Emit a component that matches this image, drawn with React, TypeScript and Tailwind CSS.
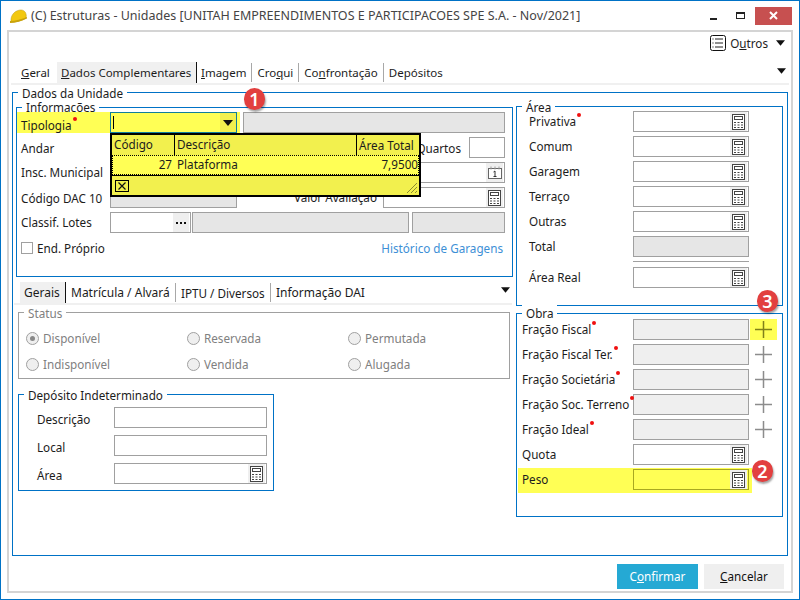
import React from "react";

const Calc = () => (
  <span className="flex w-[17px] h-[19px] items-center justify-center bg-[#efefef]">
    <svg width="14" height="16" viewBox="0 0 14 16" fill="none">
      <rect x="0.5" y="0.5" width="12" height="15" fill="#fff" stroke="#444" />
      <rect x="2.5" y="2.5" width="8" height="3" fill="#fff" stroke="#444" />
      <path d="M2 8h2v1H2zM5.500 8h2v1h-2zM9 8h2v1H9zM2 10.500h2v1H2zM5.500 10.500h2v1h-2zM9 10.500h2v1H9zM2 13h2v1H2zM5.500 13h2v1h-2zM9 13h2v1H9z" fill="#444" />
    </svg>
  </span>
);

const Caret = ({ w = 10 }: { w?: number }) => (
  <svg width={w} height="6" viewBox="0 0 10 6"><path d="M0 0h10L5 6z" fill="#111" /></svg>
);

const Star = () => <span className="inline-block w-[4px] h-[4px] rounded-full bg-[#f01010] mb-[9px] ml-[1px]" />;

function Input({ w, kind = "plain", icon, className = "" }: { w: number; kind?: "plain" | "gray" | "light" | "yellow"; icon?: React.ReactNode; className?: string }) {
  const bg = kind === "gray" ? "bg-[#e6e6e6]" : kind === "light" ? "bg-[#efefef]" : kind === "yellow" ? "bg-[#ffff55] border-[#a8a820]" : "bg-white";
  return (
    <div style={{ width: w }} className={`h-[21px] shrink-0 border border-[#a0a0a0] flex items-center justify-end pr-[1px] ${bg} ${className}`}>
      {icon}
    </div>
  );
}

function Box({ title, className = "", gray = false, raised = false, children }: { title: string; className?: string; gray?: boolean; raised?: boolean; children?: React.ReactNode }) {
  return (
    <div className={`relative border ${gray ? "border-[#a0a0a0]" : "border-[#0072c6]"} ${className}`}>
      <span className={`absolute left-[5px] ${raised ? "top-[-9px]" : "top-[-8px]"} h-[16px] leading-[16px] bg-white px-[4px] whitespace-nowrap ${gray ? "text-[#808080]" : ""}`}>{title}</span>
      {children}
    </div>
  );
}

const Sep = () => <span className="w-px h-[19px] bg-[#a8a8a8] mx-[5px]" />;

const Badge = ({ n, className }: { n: number; className: string }) => (
  <span className={`absolute z-30 w-[21px] h-[22px] rounded-full bg-[#e23f3f] text-white text-[18px] font-semibold leading-[22px] text-center shadow-[1px_2px_2px_rgba(0,0,0,0.35)] ${className}`}>{n}</span>
);

function AreaRow({ label, star, kind = "calc" }: { label: string; star?: boolean; kind?: "calc" | "gray" }) {
  return (
    <div className="flex h-[21px] mb-[4px]">
      <div className="w-[116px] pl-[12px] leading-[21px]">{label}{star && <Star />}</div>
      <Input w={116} kind={kind === "gray" ? "gray" : "plain"} icon={kind === "calc" ? <Calc /> : undefined} />
    </div>
  );
}

function ObraRow({ label, hi }: { label: string; hi?: boolean }) {
  return (
    <div className="flex h-[21px] mb-[4px]">
      <div className="relative z-10 w-[116px] pl-[5px] leading-[21px] whitespace-nowrap">{label}<Star /></div>
      <Input w={116} kind="light" />
      <div className={`ml-[1px] w-[27px] h-[21px] flex items-center justify-center ${hi ? "bg-[#ffff55]" : ""}`}>
        <svg width="17" height="17" viewBox="0 0 17 17"><path d="M0 8.500h17M8.500 0v17" stroke={hi ? "#80801a" : "#8c8c8c"} strokeWidth="1.500" /></svg>
      </div>
    </div>
  );
}

const Radio = ({ label, on }: { label: string; on?: boolean }) => (
  <div className="flex items-center gap-[4px] text-[#808080]">
    <span className="w-[13px] h-[13px] rounded-full border border-[#a0a0a0] bg-[#efefef] flex items-center justify-center">
      {on && <span className="w-[5px] h-[5px] rounded-full bg-[#888]" />}
    </span>
    {label}
  </div>
);

export default function App() {
  return (
    <div className="relative w-[800px] h-[600px] flex flex-col border border-[#0072c6] bg-white text-[11.7px] leading-[16px] text-[#1c1c1c] font-['Noto_Sans','Open_Sans',sans-serif] overflow-hidden">
      {/* title bar */}
      <div className="h-[29px] flex items-center shrink-0 pl-[9px] relative">
        <svg width="18" height="14" viewBox="0 0 18 14" className="mr-[3px]">
          <path d="M1 11 C1 5 6 1 11 1 C15 1 17 5 16 9 C12 12 6 13 1 13 Z" fill="#f2c80f" stroke="#b89a10" strokeWidth="0.500" />
          <path d="M0 12 C5 12 12 10 17 8 L17 9.500 C12 12 5 14 0 14 Z" fill="#c9a30c" />
        </svg>
        <span className="text-[12.5px] text-[#444] whitespace-nowrap">(C) Estruturas - Unidades [UNITAH EMPREENDIMENTOS E PARTICIPACOES SPE S.A. - Nov/2021]</span>
        <div className="ml-auto flex items-center mr-[7px]">
          <span className="w-[7px] h-[2px] bg-[#222] mt-[7px] mr-[19px]" />
          <span className="w-[9px] h-[7px] border border-t-2 border-[#222] mr-[10px]" />
          <span className="w-[37px] h-[18px] bg-[#c75050] flex items-center justify-center">
            <svg width="9" height="9" viewBox="0 0 9 9"><path d="M1 1l7 7M8 1l-7 7" stroke="#fff" strokeWidth="2" /></svg>
          </span>
        </div>
      </div>

      {/* client */}
      <div className="relative mx-[6px] mb-[6px] flex-1 border-2 border-[#d4d4d4] flex flex-col">
        {/* toolbar */}
        <div className="h-[28px] flex items-center justify-end pr-[6px] pb-[7px] shrink-0">
          <svg width="16" height="16" viewBox="0 0 16 16" fill="none" className="mr-[4px]">
            <rect x="0.500" y="0.500" width="15" height="15" rx="2" stroke="#111" />
            <path d="M5 4h8M5 8h8M5 12h8" stroke="#222" />
            <path d="M2.500 3.500h1v1h-1zM2.500 7.500h1v1h-1zM2.500 11.500h1v1h-1z" fill="#111" />
          </svg>
          <span><span>O</span><u>u</u><span>tros</span></span>
          <span className="ml-[8px]"><Caret w={9} /></span>
        </div>

        {/* tabs */}
        <div className="mt-[2px] h-[23px] shrink-0 mx-[2px] border-b-2 border-[#f0f0f0] flex items-stretch pl-[10px] relative text-[11.5px]">
          <span className="w-[36px] flex items-center"><u>G</u>eral</span>
          <span className="w-[140px] pl-[4px] bg-[#f0f0f0] border-r border-[#111] flex items-center whitespace-nowrap"><span><u>D</u>ados Complementares</span></span>
          <div className="flex items-center ml-[4px]">
            <span><u>I</u>magem</span><Sep />
            <span>Cro<u>q</u>ui</span><Sep />
            <span>Co<u>n</u>frontação</span><Sep />
            <span>Depósitos</span>
          </div>
          <span className="ml-auto mr-[3px] mt-[6px]"><Caret w={9} /></span>
        </div>

        {/* Dados da Unidade */}
        <Box title="Dados da Unidade" className="mt-[7px] ml-[3px] w-[776px] h-[464px] flex shrink-0">
          <div className="w-[500px] shrink-0 ml-[3px] mt-[14px] flex flex-col">
            <Box title="Informações" raised className="w-[497px] h-[170px] pl-[4px] pt-[4px] shrink-0">
              <div className="flex h-[21px] mb-[4px] relative">
                <div className="absolute left-[-4px] top-0 w-[223px] h-[21px] bg-[#ffff55]" />
                <div className="relative w-[89px] pt-[4px] leading-[18px]">Tipologia<Star /></div>
                <div className="relative w-[127px] h-[21px] border border-[#0f7f9c] flex items-center justify-end shrink-0">
                  <span className="absolute left-[2px] top-[3px] w-px h-[13px] bg-black" />
                  <span className="w-[16px] h-[19px] bg-[#f2f04e] flex items-center justify-center"><Caret /></span>
                </div>
                <Input w={262} kind="gray" className="ml-[6px]" />
              </div>
              <div className="flex h-[21px] mb-[4px]">
                <div className="w-[89px] pt-[2px] leading-[18px]">Andar</div>
                <Input w={127} />
                <div className="flex-1 text-right pr-[8px] pt-[2px] leading-[18px]">Quartos</div>
                <Input w={36} className="mr-[7px]" />
              </div>
              <div className="flex h-[21px] mb-[4px]">
                <div className="w-[89px] pt-[1px] leading-[18px] whitespace-nowrap">Insc. Municipal</div>
                <Input w={127} />
                <div className="flex-1" />
                <Input w={122} className="mr-[7px]" icon={
                  <span className="flex w-[17px] h-[19px] items-center justify-center bg-[#efefef]">
                    <svg width="14" height="13" viewBox="0 0 14 13" fill="none">
                      <rect x="0.500" y="2.500" width="13" height="10" fill="#fff" stroke="#666" />
                      <path d="M3 0.500v3M7 0.500v3M11 0.500v3" stroke="#999" />
                      <path d="M5.500 6l1.500-1v5M5.500 10.500h3" stroke="#333" />
                    </svg>
                  </span>
                } />
              </div>
              <div className="flex h-[21px] mb-[4px]">
                <div className="w-[89px] pt-[2px] leading-[18px] whitespace-nowrap">Código DAC 10</div>
                <Input w={127} kind="gray" />
                <div className="flex-1 text-right pr-[6px] pt-[1px] leading-[18px]">Valor Avaliação</div>
                <Input w={122} className="mr-[7px]" icon={<Calc />} />
              </div>
              <div className="flex h-[21px] mb-[4px]">
                <div className="w-[89px] pt-[1px] leading-[18px]">Classif. Lotes</div>
                <div className="w-[81px] h-[21px] shrink-0 border border-[#a0a0a0] flex justify-end items-center pr-px">
                  <span className="w-[16px] h-[19px] bg-[#efefef] flex items-center justify-center">
                    <svg width="10" height="2" viewBox="0 0 10 2"><path d="M0 0h2v2H0zM4 0h2v2H4zM8 0h2v2H8z" fill="#111" /></svg>
                  </span>
                </div>
                <Input w={217} kind="gray" className="ml-[1px]" />
                <Input w={93} kind="gray" className="ml-[3px]" />
              </div>
              <div className="flex h-[21px] items-center">
                <span className="w-[12px] h-[12px] border border-[#a0a0a0] bg-white mr-[4px] mt-[1px]" />
                <span>End. Próprio</span>
                <span className="ml-auto mr-[9px] text-[#3d8fd6]">Histórico de Garagens</span>
              </div>

              {/* dropdown popup */}
              <div className="absolute z-20 left-[93px] top-[25px] w-[311px] h-[64px] border-2 border-black bg-[#f2f04e] flex flex-col">
                <div className="h-[20px] flex items-center shrink-0">
                  <div className="w-[63px] h-full border-r border-black pl-[2px] leading-[19px]">Código</div>
                  <div className="w-[182px] h-full border-r border-black pl-[2px] leading-[19px]">Descrição</div>
                  <div className="pl-[2px] leading-[19px]">Área Total</div>
                </div>
                <div className="h-[20px] flex border border-dotted border-black bg-[#ffff55] shrink-0">
                  <div className="w-[62px] text-right pr-[3px] leading-[16px]">27</div>
                  <div className="w-[182px] pl-[2px] leading-[16px]">Plataforma</div>
                  <div className="flex-1 text-right pr-0 leading-[16px]">7,9500</div>
                </div>
                <div className="flex-1 relative border-t border-black">
                  <span className="absolute left-[3px] top-[4px] w-[14px] h-[12px] border border-black flex items-center justify-center">
                    <svg width="8" height="8" viewBox="0 0 8 8"><path d="M0.500 0.500l7 7M7.500 0.500l-7 7" stroke="#111" strokeWidth="1.200" /></svg>
                  </span>
                  <svg width="12" height="12" viewBox="0 0 12 12" className="absolute right-[1px] bottom-[1px]">
                    <path d="M1 11L11 1M5 11l6-6M9 11l2-2" stroke="#8a8a30" />
                  </svg>
                </div>
              </div>
            </Box>

            {/* sub tabs */}
            <div className="mt-[5px] -ml-[2px] w-[498px] h-[23px] shrink-0 border-b-2 border-[#f0f0f0] flex items-stretch pl-[6px] text-[12px]">
              <span className="w-[46px] pl-[4px] bg-[#f0f0f0] border-r border-[#111] flex items-center">Gerais</span>
              <div className="flex items-center ml-[5px]">
                <span className="w-[99px] whitespace-nowrap">Matrícula / Alvará</span><Sep />
                <span className="w-[84px] whitespace-nowrap text-[11.7px]">IPTU / Diversos</span><Sep />
                <span className="whitespace-nowrap">Informação DAI</span>
              </div>
              <span className="ml-auto mr-[2px] mt-[5px]"><Caret w={9} /></span>
            </div>

            <Box title="Status" gray className="mt-[7px] ml-[2px] w-[492px] h-[67px] shrink-0 pl-[7px] pt-[17px]">
              <div className="grid grid-cols-[161px_161px_161px] gap-y-[10px]">
                <Radio label="Disponível" on />
                <Radio label="Reservada" />
                <Radio label="Permutada" />
                <Radio label="Indisponível" />
                <Radio label="Vendida" />
                <Radio label="Alugada" />
              </div>
            </Box>

            <Box title="Depósito Indeterminado" className="mt-[15px] ml-[2px] w-[256px] h-[97px] shrink-0 pt-[12px]">
              {["Descrição", "Local", "Área"].map((l, i) => (
                <div key={l} className="flex h-[21px] mb-[7px]">
                  <div className="w-[95px] pl-[18px] pt-[3px] leading-[18px]">{l}</div>
                  <Input w={153} icon={i === 2 ? <Calc /> : undefined} />
                </div>
              ))}
            </Box>
          </div>

          <div className="flex flex-col mt-[13px]">
            <Box title="Área" className="w-[267px] h-[200px] pt-[4px] shrink-0">
              <AreaRow label="Privativa" star />
              <AreaRow label="Comum" />
              <AreaRow label="Garagem" />
              <AreaRow label="Terraço" />
              <AreaRow label="Outras" />
              <AreaRow label="Total" kind="gray" />
              <div className="ml-[116px] w-[116px] h-px bg-[#a0a0a0] mb-[5px]" />
              <AreaRow label="Área Real" />
            </Box>
            <Box title="Obra" raised className="mt-[7px] w-[267px] h-[204px] pt-[5px] shrink-0">
              <ObraRow label="Fração Fiscal" hi />
              <ObraRow label="Fração Fiscal Ter." />
              <ObraRow label="Fração Societária" />
              <ObraRow label="Fração Soc. Terreno" />
              <ObraRow label="Fração Ideal" />
              <div className="flex h-[21px] mb-[4px]">
                <div className="w-[116px] pl-[5px] leading-[21px]">Quota</div>
                <Input w={116} icon={<Calc />} />
              </div>
              <div className="flex h-[25px] -mt-[1px] ml-[1px] w-[234px] bg-[#ffff55] pt-[1px]">
                <div className="w-[115px] pl-[4px] leading-[21px]">Peso</div>
                <Input w={116} kind="yellow" icon={<Calc />} />
              </div>
            </Box>
          </div>
        </Box>

        {/* footer */}
        <div className="flex justify-end gap-[6px] pr-[7px] mt-[8px]">
          <button className="w-[81px] h-[25px] bg-[#25a9d4] text-white pb-[2px]">C<u>o</u>nfirmar</button>
          <button className="w-[80px] h-[25px] bg-[#efefef] text-[#111] pb-[2px]"><u>C</u>ancelar</button>
        </div>
      </div>

      <Badge n={1} className="left-[243px] top-[87px]" />
      <Badge n={2} className="left-[751px] top-[459px]" />
      <Badge n={3} className="left-[756px] top-[289px]" />
    </div>
  );
}
